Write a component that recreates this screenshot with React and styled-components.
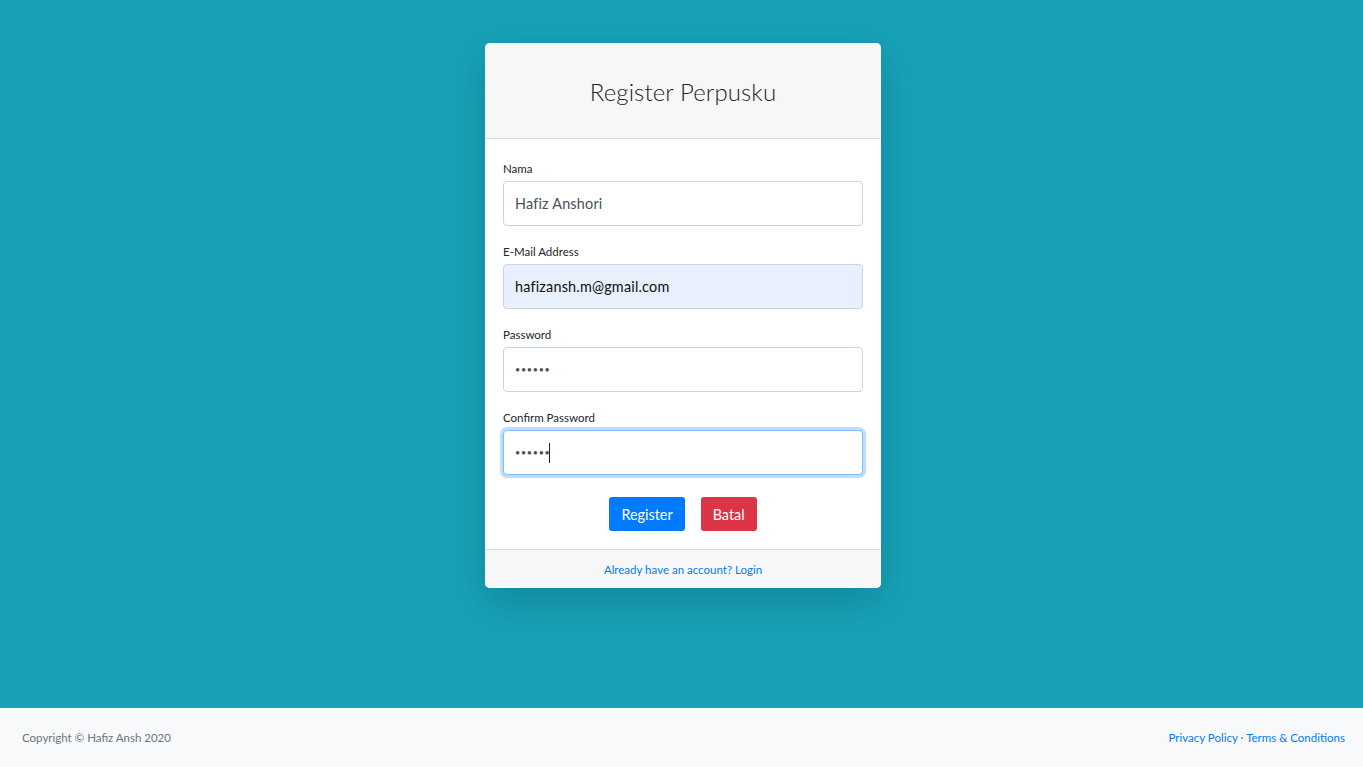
import React from "react";
import styled, { createGlobalStyle } from "styled-components";

const Global = createGlobalStyle`
  html, body { margin: 0; padding: 0; }
  body {
    font-family: "Lato", "Open Sans", sans-serif;
    color: #212529;
    background: #17a2b8;
  }
  * { box-sizing: border-box; }
`;

const Layout = styled.div`
  min-height: 100vh;
  display: flex;
  flex-direction: column;
  background: #17a2b8;
`;

const Main = styled.main`
  flex: 1;
  display: flex;
  justify-content: center;
  align-items: flex-start;
  padding: 43px 0 0 3px;
`;

const Card = styled.div`
  width: 396px;
  background: #fff;
  border-radius: 5px;
  overflow: hidden;
  box-shadow: 0 14px 43px rgba(0, 0, 0, 0.175);
`;

const CardHeader = styled.div`
  background: #f7f7f7;
  border-bottom: 1px solid #dcdcdc;
  height: 96px;
  padding-top: 2px;
  display: flex;
  align-items: center;
  justify-content: center;
`;

const Title = styled.h3`
  margin: 0;
  font-size: 24px;
  font-weight: 300;
  color: #212529;
  letter-spacing: 0.1px;
`;

const CardBody = styled.div`
  padding: 20px 18px 18px;
`;

const Group = styled.div`
  margin-bottom: 16px;
  position: relative;
`;

const Label = styled.label`
  display: block;
  font-size: 11.5px;
  line-height: 16px;
  padding-top: 2px;
  margin-bottom: 4px;
  color: #212529;
`;

const Input = styled.input`
  display: block;
  width: 100%;
  height: 45px;
  padding: 0 11px;
  font-family: inherit;
  font-size: ${(p) => (p.type === "password" ? "9px" : "14.4px")};
  color: ${(p) => (p.$autofill ? "#111" : "#495057")};
  background: ${(p) => (p.$autofill ? "#e8f0fe" : "#fff")};
  border: 1px solid ${(p) => (p.$focus ? "#80bdff" : "#ced4da")};
  border-radius: 4px;
  box-shadow: ${(p) => (p.$focus ? "0 0 0 3px rgba(0,123,255,.25)" : "none")};
  outline: none;
  letter-spacing: ${(p) => (p.type === "password" ? "0.7px" : "0.2px")};
`;

const Caret = styled.span`
  position: absolute;
  left: 46px;
  bottom: 12px;
  width: 1px;
  height: 20px;
  background: #212529;
`;

const Actions = styled.div`
  display: flex;
  justify-content: center;
  gap: 16px;
  margin-top: 22px;
`;

const Button = styled.button`
  height: 34px;
  padding: 0 12px;
  border: none;
  border-radius: 3px;
  color: #fff;
  font-family: inherit;
  font-size: 14.4px;
  background: ${(p) => (p.$variant === "danger" ? "#dc3545" : "#007bff")};
  cursor: pointer;
`;

const CardFooter = styled.div`
  background: #f7f7f7;
  border-top: 1px solid #dcdcdc;
  height: 39px;
  display: flex;
  align-items: center;
  justify-content: center;
`;

const Link = styled.a`
  color: #007bff;
  font-size: 11.5px;
  text-decoration: none;
`;

const Footer = styled.footer`
  height: 59px;
  background: #f8f9fa;
  display: flex;
  align-items: center;
  justify-content: space-between;
  padding: 0 18px 0 22px;
  font-size: 11.5px;
`;

const Muted = styled.div`
  color: #6c757d;
`;

const FooterLinks = styled.div`
  color: #6c757d;
`;

export default function App() {
  return (
    <>
      <Global />
      <Layout>
        <Main>
          <Card>
            <CardHeader>
              <Title>Register Perpusku</Title>
            </CardHeader>
            <CardBody>
              <Group>
                <Label>Nama</Label>
                <Input type="text" defaultValue="Hafiz Anshori" />
              </Group>
              <Group>
                <Label>E-Mail Address</Label>
                <Input type="email" $autofill defaultValue="hafizansh.m@gmail.com" />
              </Group>
              <Group>
                <Label>Password</Label>
                <Input type="password" defaultValue="123456" />
              </Group>
              <Group>
                <Label>Confirm Password</Label>
                <Input type="password" $focus defaultValue="123456" />
                <Caret />
              </Group>
              <Actions>
                <Button>Register</Button>
                <Button $variant="danger">Batal</Button>
              </Actions>
            </CardBody>
            <CardFooter>
              <Link href="#">Already have an account? Login</Link>
            </CardFooter>
          </Card>
        </Main>
        <Footer>
          <Muted>Copyright © Hafiz Ansh 2020</Muted>
          <FooterLinks>
            <Link href="#">Privacy Policy</Link>
            {" · "}
            <Link href="#">Terms &amp; Conditions</Link>
          </FooterLinks>
        </Footer>
      </Layout>
    </>
  );
}
